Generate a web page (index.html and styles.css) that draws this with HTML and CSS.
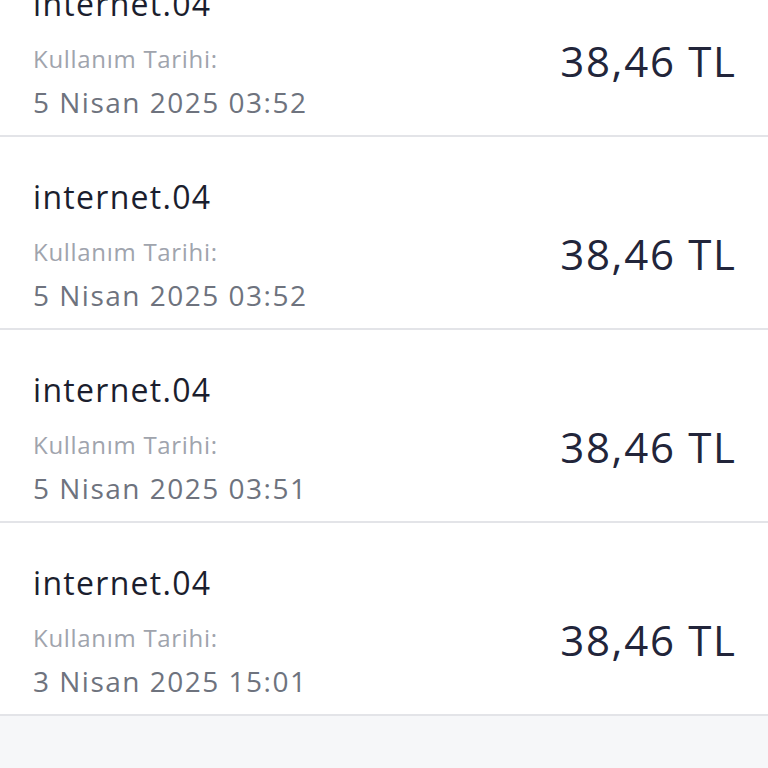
FILE: index.html
```html
<!DOCTYPE html>
<html lang="tr">
<head>
<meta charset="utf-8">
<title>Kullanım</title>
<link rel="stylesheet" href="styles.css">
</head>
<body>
<div class="list">
  <div class="item">
    <div class="info">
      <div class="title">internet.04</div>
      <div class="label">Kullanım Tarihi:</div>
      <div class="date">5 Nisan 2025 03:52</div>
    </div>
    <div class="amount">38,46 TL</div>
  </div>
  <div class="item">
    <div class="info">
      <div class="title">internet.04</div>
      <div class="label">Kullanım Tarihi:</div>
      <div class="date">5 Nisan 2025 03:52</div>
    </div>
    <div class="amount">38,46 TL</div>
  </div>
  <div class="item">
    <div class="info">
      <div class="title">internet.04</div>
      <div class="label">Kullanım Tarihi:</div>
      <div class="date">5 Nisan 2025 03:51</div>
    </div>
    <div class="amount">38,46 TL</div>
  </div>
  <div class="item">
    <div class="info">
      <div class="title">internet.04</div>
      <div class="label">Kullanım Tarihi:</div>
      <div class="date">3 Nisan 2025 15:01</div>
    </div>
    <div class="amount">38,46 TL</div>
  </div>
</div>
</body>
</html>
```
FILE: styles.css
```css
html, body {
  margin: 0;
  padding: 0;
  background: #f6f7f9;
  height: 100%;
}
body {
  font-family: "Open Sans", "Noto Sans", sans-serif;
  overflow: hidden;
}
.list {
  margin-top: -56px;
  background: #ffffff;
}
.item {
  display: flex;
  justify-content: space-between;
  align-items: flex-start;
  height: 191px;
  padding: 0 33px;
  border-bottom: 2px solid #e3e4e8;
}
.info {
  display: flex;
  flex-direction: column;
  padding-top: 40px;
}
.title {
  font-size: 32px;
  line-height: 40px;
  letter-spacing: 1.3px;
  color: #1b1e2e;
}
.label {
  font-size: 24px;
  line-height: 32px;
  margin-top: 19px;
  letter-spacing: 0.7px;
  color: #a0a4ad;
}
.date {
  font-size: 28px;
  line-height: 36px;
  margin-top: 9px;
  letter-spacing: 1.5px;
  color: #6e737e;
}
.amount {
  margin-top: 92px;
  font-size: 42px;
  line-height: 50px;
  letter-spacing: 1.7px;
  margin-right: -1.7px;
  color: #22253a;
}
```
